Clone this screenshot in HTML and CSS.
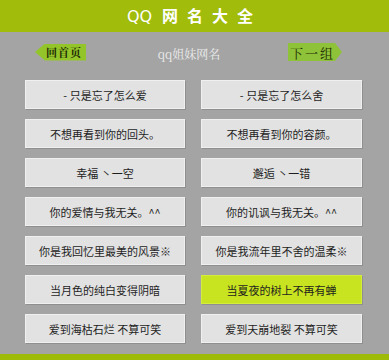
FILE: index.html
```html
<!DOCTYPE html>
<html lang="zh">
<head>
<meta charset="utf-8">
<title>QQ网名大全</title>
<link rel="stylesheet" href="styles.css">
</head>
<body>
<div class="page">
  <header class="top">
    <h1 class="title"><span class="qq">QQ</span>网名大全</h1>
  </header>
  <nav class="nav">
    <a class="btn btn-back">回首页</a>
    <span class="cat">qq姐妹网名</span>
    <a class="btn btn-next">下一组</a>
  </nav>
  <ul class="grid">
    <li class="item">- 只是忘了怎么爱</li>
    <li class="item">- 只是忘了怎么舍</li>
    <li class="item">不想再看到你的回头。</li>
    <li class="item">不想再看到你的容颜。</li>
    <li class="item">幸福 丶一空</li>
    <li class="item">邂逅 丶一错</li>
    <li class="item">你的爱情与我无关。^^</li>
    <li class="item">你的讥讽与我无关。^^</li>
    <li class="item">你是我回忆里最美的风景※</li>
    <li class="item">你是我流年里不舍的温柔※</li>
    <li class="item">当月色的纯白变得阴暗</li>
    <li class="item active">当夏夜的树上不再有蝉</li>
    <li class="item">爱到海枯石烂 不算可笑</li>
    <li class="item">爱到天崩地裂 不算可笑</li>
  </ul>
  <footer class="bottom"></footer>
</div>
</body>
</html>
```

FILE: styles.css
```css
html, body {
  margin: 0;
  padding: 0;
}
body {
  background: #a4a4a4;
  font-family: "Noto Sans CJK SC", "Noto Sans", sans-serif;
}
.page {
  width: 389px;
  height: 360px;
  display: flex;
  flex-direction: column;
  overflow: hidden;
}
.top {
  height: 32px;
  background: #a1bc0b;
  display: flex;
  align-items: center;
  justify-content: center;
}
.title {
  margin: 0 0 0 0;
  color: #ffffff;
  font-family: "Noto Sans CJK SC", sans-serif;
  font-size: 16px;
  font-weight: 700;
  letter-spacing: 9px;
  line-height: 1;
  white-space: nowrap;
}
.qq {
  letter-spacing: 0;
  margin-right: 10px;
  font-family: "DejaVu Sans", sans-serif;
  font-weight: 400;
  font-size: 16px;
}
.nav {
  height: 38px;
  display: flex;
  align-items: center;
  padding: 0 47px 0 35px;
  margin-top: 1px;
}
.btn {
  height: 17px;
  display: flex;
  align-items: center;
  background: #93c52a;
  color: #1f2c05;
  font-family: "Noto Serif CJK SC", "Noto Sans CJK SC", serif;
  font-size: 11px;
  font-weight: 700;
  letter-spacing: 1px;
  white-space: nowrap;
}
.btn-back {
  width: 51px;
  padding-left: 11px;
  box-sizing: border-box;
  clip-path: polygon(10px 0, 100% 0, 100% 100%, 10px 100%, 0 50%);
}
.btn-next {
  width: 54px;
  height: 18px;
  padding-left: 2px;
  box-sizing: border-box;
  font-weight: 400;
  font-size: 13px;
  letter-spacing: 2px;
  background: #8ec238;
  clip-path: polygon(0 0, calc(100% - 7px) 0, 100% 50%, calc(100% - 7px) 100%, 0 100%);
}
.cat {
  flex: 1;
  text-align: center;
  color: #ececec;
  font-family: "Noto Serif CJK SC", "Liberation Serif", serif;
  font-size: 12px;
  margin-top: 3px;
  margin-left: 4px;
}
.grid {
  list-style: none;
  margin: 9px 0 0 0;
  padding: 0 0 0 25px;
  display: grid;
  grid-template-columns: 160px 161px;
  grid-auto-rows: 29px;
  column-gap: 16px;
  row-gap: 10px;
}
.item {
  box-sizing: border-box;
  background: #e2e2e2;
  border: 1px solid #f0f0f0;
  box-shadow: 1px 1px 0 #8f8f8f;
  display: flex;
  align-items: center;
  justify-content: center;
  font-size: 11px;
  color: #1e1e1e;
  white-space: nowrap;
}
.item.active {
  background: #c8e31f;
  border-color: #d4ec3a;
}
.bottom {
  margin-top: auto;
  height: 6px;
  background: #9fbb0a;
}
```
